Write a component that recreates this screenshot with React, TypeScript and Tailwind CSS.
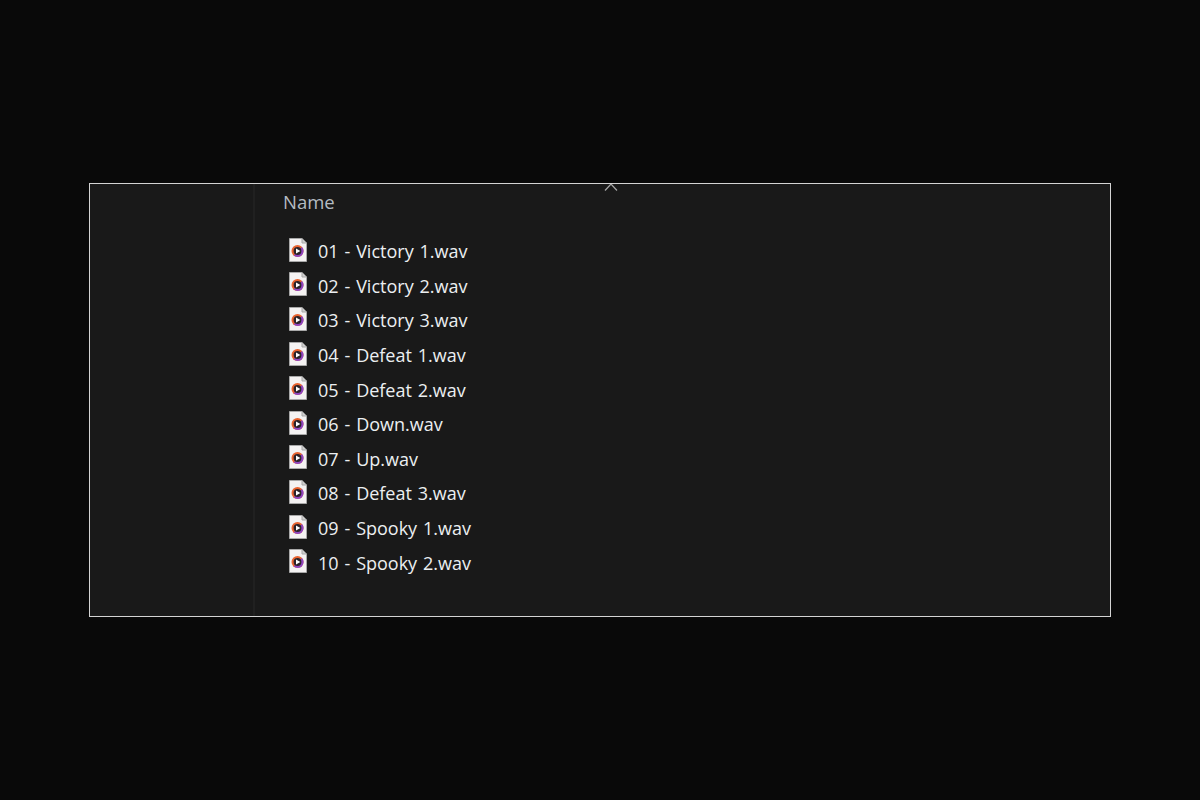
const files = [
  '01 - Victory 1.wav',
  '02 - Victory 2.wav',
  '03 - Victory 3.wav',
  '04 - Defeat 1.wav',
  '05 - Defeat 2.wav',
  '06 - Down.wav',
  '07 - Up.wav',
  '08 - Defeat 3.wav',
  '09 - Spooky 1.wav',
  '10 - Spooky 2.wav',
]

function WavIcon() {
  return (
    <svg width="18" height="24" viewBox="0 0 18 24" className="mb-[3px] shrink-0">
      <path d="M0.5 0.5H13L17.5 5V23.5H0.5Z" fill="#f4f2f2" stroke="#a8a8a8" strokeWidth="1" />
      <path d="M13 0.5V5H17.5" fill="#cfcfcf" stroke="#a8a8a8" strokeWidth="1" />
      <circle cx="8.5" cy="13" r="6" fill="#e8622e" />
      <path d="M13 9A6 6 0 0 1 8.5 19A6 6 0 0 1 4.6 17.6Z" fill="#8f45c0" />
      <circle cx="8.5" cy="13" r="3.9" fill="#2b2228" />
      <path d="M7 10.6L11.4 13L7 15.4Z" fill="#ffffff" />
    </svg>
  )
}

export default function App() {
  return (
    <div className="flex h-[800px] w-[1200px] items-center justify-center bg-[#090909] font-['Open_Sans','Noto_Sans',sans-serif]">
      <div className="relative flex h-[434px] w-[1022px] overflow-hidden border border-[#d4d4d4] bg-[#191919]">
        <div className="w-[165px] shrink-0 border-r-2 border-[#202020]" />
        <div className="flex-1 pl-[28px]">
          <div className="pt-[5px] text-[18.5px] leading-[26px] text-[#b4bcc2]">Name</div>
          <div className="mt-[19px] flex flex-col pl-[6px]">
            {files.map((file) => (
              <div key={file} className="flex h-[34.6px] items-center gap-[11px]">
                <WavIcon />
                <span className="text-[18px] leading-[26px] text-[#eceff1] [word-spacing:1.2px]">{file}</span>
              </div>
            ))}
          </div>
        </div>
        <svg
          width="14"
          height="7"
          viewBox="0 0 14 7"
          className="absolute left-[514px] top-0"
          fill="none"
          stroke="#a8a8a8"
          strokeWidth="1.2"
        >
          <path d="M1 6.5L7 0L13 6.5" />
        </svg>
      </div>
    </div>
  )
}
